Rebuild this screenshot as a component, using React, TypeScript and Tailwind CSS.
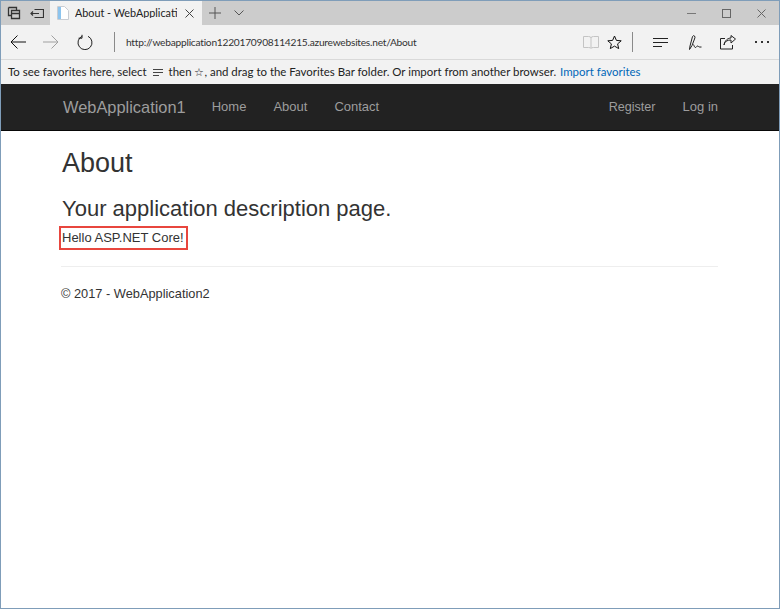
import React from "react";

const Ui = "[font-family:Lato,sans-serif]";

function Stroke({ w, h, children, className = "" }: { w: number; h: number; children: React.ReactNode; className?: string }) {
  return (
    <svg width={w} height={h} viewBox={`0 0 ${w} ${h}`} fill="none" stroke="currentColor" strokeWidth="1" className={className}>
      {children}
    </svg>
  );
}

export default function App() {
  return (
    <div className="w-[780px] h-[609px] border border-[#7f9db9] bg-white flex flex-col overflow-hidden font-['Liberation_Sans',sans-serif]">
      {/* Tab strip */}
      <div className={`h-[24px] bg-[#cccccc] flex items-stretch text-[#333] shrink-0 ${Ui}`}>
        <div className="w-[49px] flex items-center pl-[6px] gap-[9px] text-[#333]">
          <Stroke w={14} h={14}>
            <path d="M1.500 1.500h8v3M4.500 4.500h8v8h-8zM1.500 1.500v8h3M4.500 7.500h8" strokeWidth="1.300" />
          </Stroke>
          <Stroke w={14} h={13}>
            <path d="M4.500 2.500h9v8h-9M1 6.500h8M3 4.500l-2 2 2 2" strokeWidth="1.200" />
          </Stroke>
        </div>
        <div className="w-[152px] bg-[#f2f2f2] flex items-center pl-[7px] relative">
          <svg width="12" height="14" viewBox="0 0 12 14" className="shrink-0">
            <path d="M0.500 0.500h7l4 4v9h-11z" fill="#fff" stroke="#c8ccd2" />
            <rect x="1" y="1" width="3" height="12" fill="#8cc4ee" />
          </svg>
          <span className="ml-[6px] text-[10.800px] leading-none w-[102px] overflow-hidden whitespace-nowrap text-[#222]">About - WebApplication1</span>
          <Stroke w={9} h={9} className="absolute left-[135px] top-[7.500px] text-[#444]">
            <path d="M0.500 0.500l8 8M8.500 0.500l-8 8" />
          </Stroke>
        </div>
        <div className="flex items-center pl-[7px] gap-[13px] text-[#555]">
          <Stroke w={12} h={12}>
            <path d="M6 0v12M0 6h12" />
          </Stroke>
          <Stroke w={10} h={6}>
            <path d="M0.500 0.500L5 5l4.500-4.500" />
          </Stroke>
        </div>
        <div className="ml-auto flex items-center pr-[13px] gap-[26px] text-[#666]">
          <div className="w-[9px] h-px bg-[#777]" />
          <div className="w-[9px] h-[9px] border border-[#666]" />
          <Stroke w={9} h={9}>
            <path d="M0.500 0.500l8 8M8.500 0.500l-8 8" />
          </Stroke>
        </div>
      </div>

      {/* Address bar */}
      <div className={`h-[35px] bg-[#f2f2f2] border-b border-[#d9d9d9] flex items-center shrink-0 ${Ui}`}>
        <div className="flex items-center pl-[9px] text-[#111]">
          <Stroke w={16} h={14}>
            <path d="M16 7H1M7.500 0.500L1 7l6.500 6.500" />
          </Stroke>
          <Stroke w={16} h={14} className="ml-[17px] text-[#a0a0a0]">
            <path d="M0 7h15M8.500 0.500L15 7l-6.500 6.500" />
          </Stroke>
          <svg width="16" height="16" viewBox="0 0 16 16" fill="none" stroke="#222" strokeWidth="1" className="ml-[18px]">
            <path d="M5.200 2.200A7 7 0 1 0 11 2.300M5 0.800v3.400H1.600" />
          </svg>
        </div>
        <div className="w-px h-[20px] bg-[#8a8a8a] ml-[21px]" />
        <span className="ml-[11px] text-[10.200px] tracking-[-0.240px] leading-none text-[#333] whitespace-nowrap">http://webapplication1220170908114215.azurewebsites.net/About</span>
        <div className="ml-auto flex items-center">
          <svg width="16" height="14" viewBox="0 0 16 14" fill="none" stroke="#c4c4c4" className="-ml-px">
            <path d="M0.500 1.500h5q2.500 0 2.500 1.500q0-1.500 2.500-1.500h5v11h-5q-2.500 0-2.500 1q0-1-2.500-1h-5zM8 3v10" />
          </svg>
          <svg width="15" height="15" viewBox="0 0 15 15" fill="none" stroke="#111" className="ml-[8px]">
            <path d="M7.500 1l1.900 4.400 4.800.4-3.600 3.100 1.100 4.700-4.200-2.500-4.200 2.500 1.100-4.700L.8 5.800l4.800-.4z" />
          </svg>
          <div className="w-px h-[20px] bg-[#8a8a8a] ml-[10px]" />
          <Stroke w={15} h={10} className="ml-[20px] text-[#222]">
            <path d="M0 1.500h15M0 5.500h15M0 9.500h9" />
          </Stroke>
          <svg width="14" height="15" viewBox="0 0 14 15" fill="none" stroke="#222" className="ml-[20px]">
            <path d="M1.500 14.500l.5-3.500 2.500-9.500q1-1.500 2-.5t0 3L4 10.500zM5.500 9.500c.5 1 1 3 2 3s1-1.500 2-1.500 1 1.500 4 1" />
          </svg>
          <svg width="16" height="15" viewBox="0 0 16 15" fill="none" stroke="#222" className="ml-[18px]">
            <path d="M5 3.500H.5v10.500h12v-4M4 10c.5-3.500 3-5 7-5V8l4.500-4L11 .5V3c-3 0-6 2-7 7z" />
          </svg>
          <div className="flex gap-[4px] ml-[19px] mr-[10px]">
            <div className="w-[2px] h-[2px] bg-[#333]" />
            <div className="w-[2px] h-[2px] bg-[#333]" />
            <div className="w-[2px] h-[2px] bg-[#333]" />
          </div>
        </div>
      </div>

      {/* Favorites hint */}
      <div className={`h-[24px] bg-[#f2f2f2] flex items-center pl-[7px] text-[11.450px] text-[#222] whitespace-nowrap shrink-0 ${Ui}`}>
        <span>To see favorites here, select</span>
        <Stroke w={10} h={7} className="mx-[6px] text-[#444]">
          <path d="M0 .5h10M0 3.500h10M0 6.500h6" />
        </Stroke>
        <span>then ☆, and drag to the Favorites Bar folder. Or import from another browser.</span>
        <span className="ml-[4px] text-[#0067b8]">Import favorites</span>
      </div>

      {/* Navbar */}
      <nav className="h-[47px] bg-[#222222] border-b border-[#080808] flex items-center pl-[62px] pr-[61px] shrink-0 text-[#9d9d9d] text-[13px]">
        <span className="text-[16.400px]">WebApplication1</span>
        <span className="ml-[26px]">Home</span>
        <span className="ml-[27px]">About</span>
        <span className="ml-[27px]">Contact</span>
        <span className="ml-auto text-[12.600px]">Register</span>
        <span className="ml-[27px]">Log in</span>
      </nav>

      {/* Body */}
      <main className="pl-[60px] pr-[61px] text-[#333] flex-1">
        <h2 className="ml-px text-[27px] leading-[30px] mt-[17px] text-[#333]">About</h2>
        <h3 className="ml-px text-[22px] leading-[24px] mt-[19px]">Your application description page.</h3>
        <p className="mt-[5px] -ml-[2px] w-[129px] h-[24px] border-2 border-[#e8463e] pl-[1px] text-[13px] leading-[20px] whitespace-nowrap">Hello ASP.NET Core!</p>
        <hr className="mt-[16px] border-t border-[#eeeeee]" />
        <p className="mt-[17px] text-[12.800px] leading-[19px]">© 2017 - WebApplication2</p>
      </main>
    </div>
  );
}
